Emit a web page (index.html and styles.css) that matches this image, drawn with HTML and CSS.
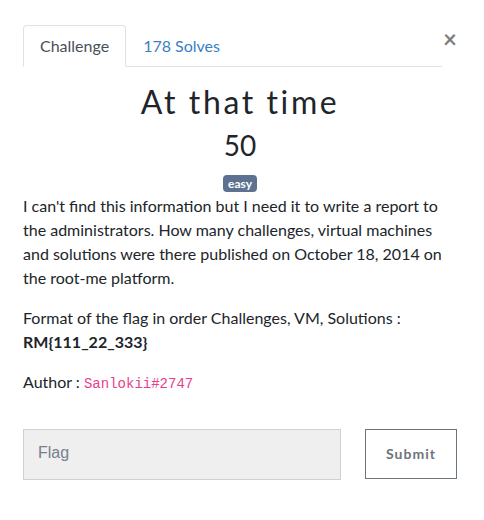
FILE: index.html
```html
<!DOCTYPE html>
<html lang="en">
<head>
<meta charset="utf-8">
<title>At that time</title>
<link rel="stylesheet" href="styles.css">
</head>
<body>
<div class="modal">
  <div class="tabs-row">
    <ul class="nav-tabs">
      <li class="tab active">Challenge</li>
      <li class="tab"><a href="#">178 Solves</a></li>
    </ul>
    <button class="close" type="button">&times;</button>
  </div>
  <h2 class="challenge-name">At that time</h2>
  <h3 class="challenge-value">50</h3>
  <div class="tags"><span class="badge">easy</span></div>
  <div class="desc">
    <p>I can't find this information but I need it to write a report to the administrators. How many challenges, virtual machines and solutions were there published on October 18, 2014 on the root-me platform.</p>
    <p>Format of the flag in order Challenges, VM, Solutions :<br><strong>RM{111_22_333}</strong></p>
    <p>Author : <code>Sanlokii#2747</code></p>
  </div>
  <div class="submit-row">
    <input class="flag-input" type="text" placeholder="Flag">
    <button class="submit-btn" type="button">Submit</button>
  </div>
</div>
</body>
</html>
```
FILE: styles.css
```css
html, body {
  margin: 0;
  padding: 0;
  background: #ffffff;
}

body {
  font-family: "Lato", "Noto Sans", sans-serif;
  font-size: 16px;
  line-height: 24px;
  color: #212529;
}

.modal {
  padding: 25px 27px 0 23px;
}

.tabs-row {
  display: flex;
  align-items: flex-start;
}

.nav-tabs {
  list-style: none;
  margin: 0;
  padding: 0;
  display: flex;
  width: 420px;
  border-bottom: 1px solid #dee2e6;
}

.tab {
  padding: 8px 16px;
  border: 1px solid transparent;
  border-top-left-radius: 4px;
  border-top-right-radius: 4px;
  margin-bottom: -1px;
  line-height: 24px;
}

.tab.active {
  color: #495057;
  border-color: #dee2e6 #dee2e6 #ffffff;
  background: #ffffff;
}

.tab a {
  color: #3a7fc4;
  text-decoration: none;
}

.close {
  margin: 2px 0 0 1px;
  padding: 0;
  border: 0;
  background: transparent;
  font-family: "Lato", sans-serif;
  font-size: 24px;
  font-weight: 700;
  line-height: 24px;
  color: #000000;
  opacity: 0.5;
  cursor: pointer;
}

.challenge-name {
  margin: 16px 0 0;
  font-size: 32px;
  line-height: 38px;
  font-weight: 400;
  letter-spacing: 2.6px;
  text-align: center;
}

.challenge-value {
  margin: 7px 0 0;
  font-size: 28px;
  line-height: 34px;
  font-weight: 400;
  text-align: center;
}

.tags {
  margin-top: 13px;
  display: flex;
  justify-content: center;
}

.badge {
  display: inline-block;
  padding: 3px 5px 2px;
  font-size: 12px;
  font-weight: 700;
  line-height: 12px;
  color: #ffffff;
  background: #5c7290;
  border-radius: 4px;
}

.desc {
  margin-top: 2px;
}

.desc p {
  margin: 0 0 16px;
}

.desc strong {
  font-weight: 700;
}

code {
  font-family: "Liberation Mono", monospace;
  font-size: 14px;
  color: #e83e8c;
}

.submit-row {
  display: flex;
  align-items: flex-start;
  justify-content: space-between;
  margin-top: 33px;
}

.flag-input {
  box-sizing: border-box;
  width: 318px;
  height: 51px;
  margin: 0;
  padding: 0 14px 4px;
  border: 1px solid #cdd2d9;
  background: #efefef;
  font-family: "Liberation Sans", Arial, sans-serif;
  font-size: 16px;
  color: #495057;
  border-radius: 0;
  outline: none;
}

.flag-input::placeholder {
  color: #75808c;
}

.submit-btn {
  box-sizing: border-box;
  width: 92px;
  height: 50px;
  margin: 0;
  padding: 0 0 2px;
  border: 1px solid #6c757d;
  background: #ffffff;
  color: #6c757d;
  font-family: "Lato", sans-serif;
  font-size: 14px;
  font-weight: 700;
  letter-spacing: 1px;
  border-radius: 0;
  cursor: pointer;
}
```
